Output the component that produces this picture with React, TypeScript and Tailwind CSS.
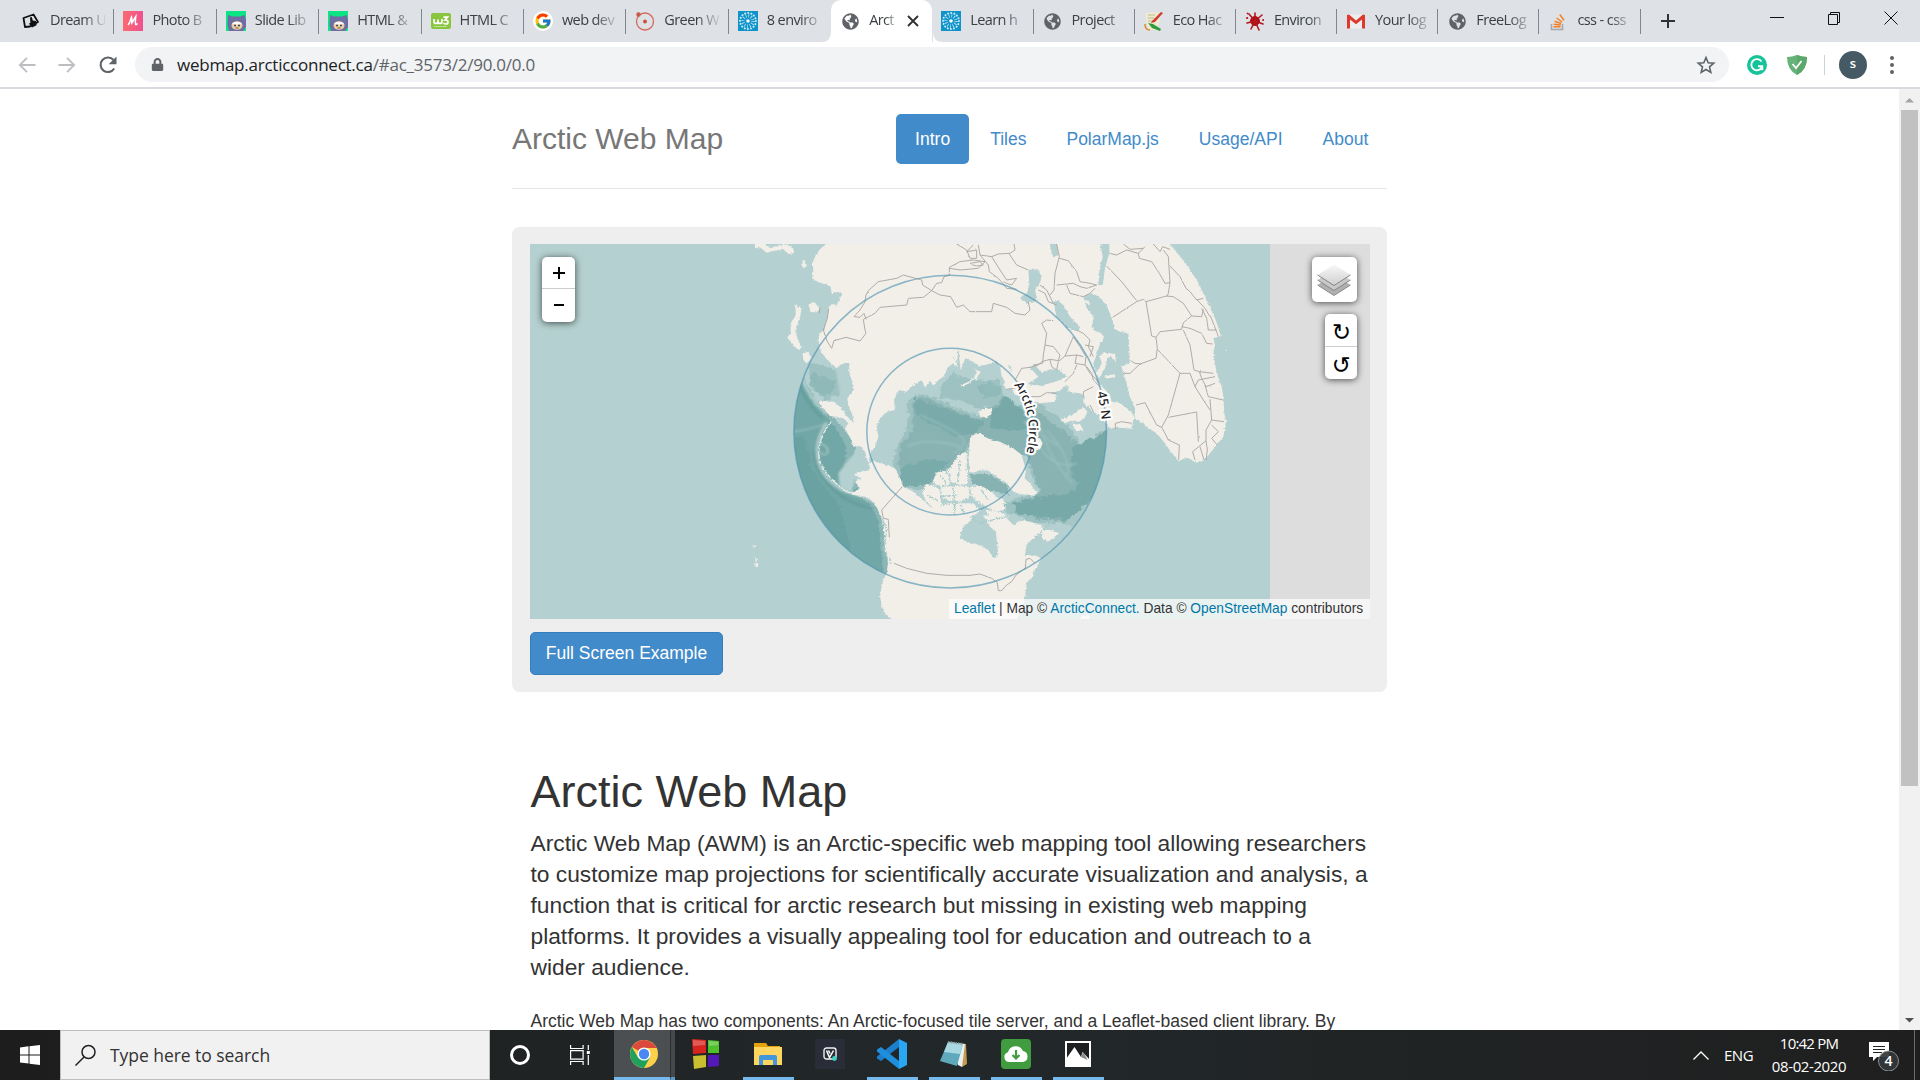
import React from "react";
import { FaGlobeAmericas, FaLock } from "react-icons/fa";
import { FcGoogle } from "react-icons/fc";

const UI = "font-['Open_Sans','Noto_Sans',sans-serif]";

/* ---------- favicons ---------- */

const Dream = () => (
  <svg viewBox="0 0 20 20" className="h-5 w-5">
    <path d="M2.5 7 12.5 3.5 17 11 9 15.5 4 16Z" fill="none" stroke="#111" strokeWidth="1.8" strokeLinejoin="round" />
    <path d="M9 6.5 10.8 6l1 3.4 3.2.6.6 4.2-4.6 2.4-3.2-4 1.6-.6Z" fill="#111" />
  </svg>
);
const Morph = () => (
  <div className="flex h-5 w-5 items-center justify-center bg-gradient-to-r from-[#fb6a6e] to-[#f0508f]">
    <svg viewBox="0 0 20 20" className="h-5 w-5">
      <path d="M5 14C7.500 12 7.500 8 8.500 6c.7 2 .2 4 .3 6C10.500 10 11 8 12.800 5.500c-.3 3-.8 5-.2 8 .8 0 1.400-.6 2-1" fill="none" stroke="#fff" strokeWidth="1.500" />
    </svg>
  </div>
);
const Cat = () => (
  <svg viewBox="0 0 20 20" className="h-5 w-5">
    <rect width="20" height="20" fill="#0be584" />
    <path d="M2 4 6 5.500h8L18.500 4 20 9v7l-3 4H3L1.500 14Z" fill="#6f6da3" />
    <ellipse cx="11" cy="14.500" rx="5.500" ry="4.300" fill="#e9cfa0" />
    <path d="M6 13c2-3 8-3 10 0l-2 .6h-6Z" fill="#fff" />
    <circle cx="9" cy="14.500" r="1" fill="#3c3650" />
    <circle cx="13" cy="14.500" r="1" fill="#3c3650" />
    <path d="M9.500 17h3" stroke="#7a5a43" />
  </svg>
);
const W3 = () => (
  <div className="flex h-4 w-5 flex-col items-center rounded-[2px] bg-[#8ac53f] text-white">
    <svg viewBox="0 0 20 16" className="h-4 w-5">
      <path d="M3 6v2.500q0 2 2 2t2-2V6.500v2q0 2 2 2t2-2V6M12.500 4.200h4L14 7q3 0 3 2t-2 2-2.500-1" fill="none" stroke="#fff" strokeWidth="1.700" />
      <path d="M3 13.500h13" stroke="#d5eab6" strokeDasharray="1.500 .6" />
    </svg>
  </div>
);
const GoogleG = () => (
  <div className="flex h-5 w-5 items-center justify-center rounded-full bg-white">
    <FcGoogle size={18} />
  </div>
);
const Orbit = () => (
  <svg viewBox="0 0 20 20" className="h-5 w-5">
    <circle cx="10" cy="10.500" r="8.500" fill="none" stroke="#d4695b" strokeWidth="1.300" />
    <circle cx="10" cy="10.500" r="2" fill="#cf4f3f" />
    <circle cx="3.500" cy="3.500" r="2.200" fill="#c95b4a" />
  </svg>
);
const Burst = () => (
  <svg viewBox="0 0 20 20" className="h-5 w-5">
    <rect width="20" height="20" fill="#0f93c9" />
    <g stroke="#c9ecfa" strokeLinecap="round">
      <circle cx="10" cy="10" r="8" fill="none" strokeWidth="2" strokeDasharray=".1 3.040" />
      <circle cx="10" cy="10" r="5" fill="none" strokeWidth="3.500" strokeDasharray=".7 1.900" strokeLinecap="butt" />
    </g>
    <circle cx="10" cy="10" r="1.800" fill="#fff" />
  </svg>
);
const Globe = () => <FaGlobeAmericas size={17} color="#5f6368" />;
const Eco = () => (
  <svg viewBox="0 0 20 20" className="h-5 w-5">
    <path d="M1 2 14 1l2 8-3 10-9-1Z" fill="#ecebd2" />
    <path d="M4 4h7M4 7h6M4 10h5" stroke="#c8b98c" />
    <path d="M8 10 17 1l2 1-8 9-4 1Z" fill="#cf3b2c" />
    <path d="m4 12 5 1 8 5-1 2-8-3Z" fill="#2f9b3a" />
    <path d="M1 13c0 4 2 6 5 6" stroke="#da8b35" fill="none" strokeWidth="1.500" />
  </svg>
);
const Splat = () => (
  <svg viewBox="0 0 20 20" className="h-5 w-5" stroke="#b3161d" strokeLinecap="round">
    <circle cx="10" cy="10" r="4.500" fill="#a80f16" />
    <path d="M10 10 4 3M10 10l7-6M10 10l8 3M10 10l4 9M10 10l-4 8M10 10 2 12M10 10V2" strokeWidth="1.600" />
    <circle cx="2" cy="7" r=".6" /><circle cx="18" cy="9" r=".5" /><circle cx="2.500" cy="2.500" r=".5" />
  </svg>
);
const Gmail = () => (
  <svg viewBox="0 0 20 20" className="h-5 w-5">
    <rect x="1.500" y="3.500" width="17" height="14" fill="#eee" />
    <path d="M1 17.500V4l2-.5 7 6 7-6 2 .5v13.500h-3V8.500l-6 4.700L4 8.500v9Z" fill="#db3a2d" />
  </svg>
);
const Stack = () => (
  <svg viewBox="0 0 20 20" className="h-5 w-5" fill="none">
    <path d="M3.500 13v5.500h11V13" stroke="#a6a8ab" strokeWidth="1.600" />
    <path d="M5.500 15.800h7M5.700 13.200l7 .8M6.600 10.300l6.600 2.200M8.600 7l5.600 4M11.800 3.500l4.200 5.800" stroke="#f48024" strokeWidth="1.500" />
  </svg>
);

type TabInfo = { title: string; icon: React.FC; active?: boolean; noSep?: boolean };
const tabs: TabInfo[] = [
  { title: "Dream U", icon: Dream },
  { title: "Photo B", icon: Morph },
  { title: "Slide Lib", icon: Cat },
  { title: "HTML &", icon: Cat },
  { title: "HTML C", icon: W3 },
  { title: "web dev", icon: GoogleG },
  { title: "Green W", icon: Orbit },
  { title: "8 enviro", icon: Burst, noSep: true },
  { title: "Arct", icon: Globe, active: true },
  { title: "Learn h", icon: Burst },
  { title: "Project", icon: Globe },
  { title: "Eco Hac", icon: Eco },
  { title: "Environ", icon: Splat },
  { title: "Your log", icon: Gmail },
  { title: "FreeLog", icon: Globe },
  { title: "css - css", icon: Stack },
];

function Tab({ t, wide }: { t: TabInfo; wide: boolean }) {
  const Icon = t.icon;
  return (
    <div className={"relative flex h-full shrink-0 items-center pl-[9px] " + (wide ? "w-[102.4px] " : "w-[101.2px] ") + (t.active ? "rounded-t-[10px] bg-white" : "")}>
      {t.active && (
        <svg viewBox="0 0 122 10" className="absolute -left-[10px] bottom-0 h-[10px] w-[122px]" fill="#fff">
          <path d="M0 10q10 0 10-10v10ZM122 10q-10 0-10-10v10Z" />
        </svg>
      )}
      <div className="flex w-5 justify-center"><Icon /></div>
      <div className={"ml-[9px] whitespace-nowrap pb-[2px] text-[14.5px] tracking-[-0.6px] text-[#3c4043] [mask-image:linear-gradient(to_right,#000_60%,rgba(0,0,0,0.12)_100%)] " + (t.active ? "w-[28px]" : "w-[55px]")}>{t.title}</div>
      {t.active && (
        <svg viewBox="0 0 12 12" className="ml-[10px] h-3 w-3" stroke="#303236" strokeWidth="1.900"><path d="m1 1 10 10M11 1 1 11" /></svg>
      )}
      {!t.active && !t.noSep && <div className="absolute right-0 top-[9px] h-[25px] w-px bg-[#80868b]" />}
    </div>
  );
}

function BrowserChrome() {
  return (
    <div className={UI}>
      <div className="flex h-[42px] bg-[#dee1e6] pl-[12px]">
        {tabs.map((t, i) => <Tab key={i} t={t} wide={i < 8} />)}
        <svg viewBox="0 0 16 16" className="ml-[19px] mt-[13px] h-4 w-4" stroke="#303236" strokeWidth="2"><path d="M8 1v14M1 8h14" /></svg>
        <div className="ml-auto flex items-start gap-[43px] pr-[22px] pt-[11px]">
          <svg viewBox="0 0 14 14" className="h-[14px] w-[14px]" stroke="#111"><path d="M0 6.500h14" /></svg>
          <svg viewBox="0 0 14 14" className="h-[14px] w-[14px]" fill="none" stroke="#111"><path d="M1.500 3.500h9v10h-9ZM3.500 3.500v-2h9v10h-2" /></svg>
          <svg viewBox="0 0 14 14" className="h-[14px] w-[14px]" stroke="#111"><path d="m.5.500 13 13M13.500.500l-13 13" /></svg>
        </div>
      </div>
      <div className="flex h-[47px] items-center border-b-2 border-[#d9dae0] bg-white pl-[17px]">
        <svg viewBox="0 0 20 20" className="h-5 w-5" fill="none" stroke="#bcbec1" strokeWidth="1.800"><path d="M18.500 10H3M10 2.800 2.800 10l7.200 7.200" /></svg>
        <svg viewBox="0 0 20 20" className="ml-5 h-5 w-5" fill="none" stroke="#bcbec1" strokeWidth="1.800"><path d="M1.500 10H17M10 2.800 17.200 10 10 17.200" /></svg>
        <svg viewBox="0 0 20 20" className="ml-[21px] h-5 w-5" fill="none" stroke="#5f6368" strokeWidth="2.100"><path d="M16.200 13.500A7.300 7.300 0 1 1 15.500 5" /><path d="M18.500 1.500v7.800h-7.800Z" fill="#5f6368" stroke="none" /></svg>
        <div className="ml-[17px] flex h-[35px] w-[1594px] items-center rounded-full bg-[#f1f3f4] pl-[16px] pr-[13px]">
          <FaLock size={13} color="#5f6368" />
          <div className="ml-[13px] text-[17px] tracking-[-0.24px] text-[#202124]">webmap.arcticconnect.ca<span className="text-[#5f6368]">/#ac_3573/2/90.0/0.0</span></div>
          <svg viewBox="0 0 20 20" className="ml-auto h-5 w-5" fill="none" stroke="#5f6368" strokeWidth="1.600"><path d="m10 2.500 2.200 5.200 5.600.5-4.300 3.700 1.300 5.500L10 14.500l-4.800 2.900 1.300-5.500L2.200 8.200l5.600-.5Z" /></svg>
        </div>
        <div className="ml-[18px] flex h-5 w-5 items-center justify-center rounded-full bg-[#15c39a]">
          <svg viewBox="0 0 20 20" className="h-5 w-5" fill="none" stroke="#fff" strokeWidth="1.900"><path d="M14.500 6.500A5.600 5.600 0 1 0 15 12M11 11.300h4.300v4" /></svg>
        </div>
        <svg viewBox="0 0 20 20" className="ml-5 h-5 w-5"><path d="M10 0q5 2 10 2 0 13-10 18Q0 15 0 2 5 2 10 0Z" fill="#67b279" /><path d="M10 0q5 2 10 2 0 13-10 18Z" fill="#5aa86b" /><path d="m5.500 9 3.500 4 5.500-7" fill="none" stroke="#fff" strokeWidth="1.800" /></svg>
        <div className="ml-[17px] h-5 w-px bg-[#cfd1d4]" />
        <div className="ml-[14px] flex h-7 w-7 items-center justify-center rounded-full bg-[#455a64] pb-px text-[13px] font-semibold text-white">s</div>
        <div className="ml-[23px] flex flex-col gap-[3px]">
          <i className="h-[4px] w-[4px] rounded-full bg-[#5f6368]" /><i className="h-[4px] w-[4px] rounded-full bg-[#5f6368]" /><i className="h-[4px] w-[4px] rounded-full bg-[#5f6368]" />
        </div>
      </div>
    </div>
  );
}

/* ---------- polar map; drawn on a grid of three units per pixel ---------- */

const EURASIA =
  "258,30 258,42 240,58 228,75 218,95 220,125 216,145 235,157 255,162 272,170 275,190 300,185 306,192 290,225 275,222 265,236 262,265 252,300 238,312 235,330 243,365 258,385 275,402 290,415 300,405 318,398 328,400 328,430 335,450 340,480 330,495 322,505 325,525 335,550 342,578 320,558 300,530 280,515 240,512 235,520 255,540 270,558 290,560 310,565 325,580 315,595 330,620 340,650 360,648 375,665 385,700 392,668 405,650 415,620 410,590 420,565 440,545 465,540 462,510 475,480 500,485 520,465 545,450 555,472 570,452 580,468 595,450 610,440 625,410 640,400 650,410 655,362 662,420 668,405 676,385 700,395 715,408 740,404 770,395 780,410 785,440 795,455 790,465 800,475 815,478 825,495 870,500 875,512 900,520 945,515 950,495 930,488 960,482 970,470 985,468 985,485 1020,490 1035,500 1030,520 1045,530 1060,545 1085,560 1095,575 1112,598 1122,592 1175,596 1180,570 1185,565 1210,580 1225,595 1250,610 1275,640 1295,670 1318,692 1340,683 1370,698 1390,693 1410,670 1430,645 1450,620 1458,575 1453,550 1450,500 1445,470 1430,430 1420,370 1425,345 1420,325 1443,318 1425,265 1400,210 1370,150 1330,90 1290,42 1282,30";

const AMERICA =
  "390,720 388,700 405,695 420,700 440,705 465,715 478,740 490,770 520,785 550,810 570,830 620,845 660,850 690,845 698,868 675,885 662,905 660,925 690,940 720,945 745,960 760,985 775,975 770,930 768,905 750,890 738,872 730,855 770,862 800,865 820,885 845,870 905,885 912,905 890,920 860,945 855,975 880,975 905,985 895,1000 880,1030 875,1045 858,1060 856,1100 850,1120 830,1172 460,1172 430,1145 420,1100 425,1062 440,1030 445,1000 435,955 430,880 415,840 395,812 375,800 345,795 318,785 340,788 360,775 345,755 365,745 342,735 350,728";

const GREENLAND =
  "690,625 702,612 720,608 742,625 780,635 820,655 845,675 852,700 857,725 854,745 870,760 885,782 897,785 880,797 840,792 820,785 805,765 770,740 745,722 720,720 700,728 688,725 686,680";

const ISLANDS = [
  "45,42 75,42 90,55 120,45 140,42 160,55 162,70 145,72 130,58 105,62 80,68 60,52 45,55",
  "188,90 196,92 200,108 192,116 186,108",
  "205,225 220,215 240,235 228,248 212,246",
  "165,225 185,232 180,262 165,300 172,325 185,350 178,360 158,345 142,322 152,310 152,280 168,255",
  "188,370 205,365 215,385 200,400 190,390",
  "660,465 680,458 700,445 712,425 700,415 690,408 705,418 720,425 712,442 695,455 670,470",
  "715,545 740,535 758,538 750,555 735,565 720,560",
  "872,640 885,625 900,625 908,640 900,658 880,662",
  "962,570 985,560 1010,545 1030,530 1042,545 1035,562 1018,575 990,572 975,580",
  "995,580 1020,582 1030,600 1010,604 1000,590",
  "1078,375 1095,368 1125,372 1128,395 1112,378 1102,385 1095,415 1078,445 1070,430 1085,400",
  "1092,440 1122,432 1126,440 1102,446",
  "910,900 930,900 958,910 940,925 920,935 905,922",
];

/* Canadian arctic islands */
const ARCHIPELAGO = [
  "640,700 655,675 682,665 686,690 682,715 684,762 660,765 630,755 632,735 622,725",
  "588,728 612,722 626,738 630,765 600,768 578,758",
  "560,762 590,770 600,785 604,825 585,838 562,820 546,790",
  "600,772 650,768 686,770 690,800 660,815 625,812 606,800",
  "690,772 720,765 755,785 780,810 800,838 770,845 740,832 715,815 695,800",
  "575,832 640,820 700,820 720,842 700,858 640,852 590,845",
  "735,840 775,845 805,858 785,868 750,860",
  "755,800 790,808 800,820 775,822",
];

const WATER = [
  "1030,200 1055,190 1078,200 1100,225 1115,265 1125,298 1140,305 1165,310 1168,360 1170,398 1145,410 1150,430 1158,455 1170,500 1185,535 1185,565 1175,545 1140,520 1115,515 1110,495 1095,478 1070,455 1072,420 1068,370 1090,325 1060,300 1055,285 1062,262 1040,235",
  "940,215 955,212 970,225 990,260 1020,290 1015,305 980,295 968,275 950,262",
  "865,120 890,118 905,135 900,160 885,180 893,212 860,218 838,205 860,190 868,165",
  "930,35 950,35 955,75 940,82 932,60",
  "1080,35 1108,35 1108,70 1095,115 1088,165 1076,165 1078,120 1088,80",
  "868,410 885,405 905,428 930,418 962,420 980,440 955,452 900,468 862,462 895,440",
];

const BORDERS = [
  "378,195 385,182 415,155 470,145 490,135 545,150 548,165 575,182 550,202 505,205 500,225 420,232 405,250 370,268 375,300 378,310 360,333 318,322 282,332 275,355 262,335 250,300",
  "378,195 375,215 360,240 342,260 360,262 372,250 378,268",
  "575,182 590,160 605,158 612,140 628,136 628,112 660,95 700,90 735,95 715,115 660,120 628,115",
  "575,182 600,195 632,200 650,232 670,225 690,245 755,245 760,220 800,232 825,250 855,255 870,240 865,215",
  "650,42 680,60 690,85 710,85 710,60 680,65 700,45",
  "715,45 720,75 755,80 775,72 810,70 825,60 822,42",
  "755,80 780,120 800,150 830,145 815,165 800,160 790,155",
  "808,72 830,105 865,120 M720,75 745,105 748,125 775,145 800,175 830,178",
  "690,100 720,95 730,105 710,108 695,104",
  "950,42 958,80 945,130 942,180 930,195 M958,85 985,92 1010,125 1020,155 1050,160 1070,165 1040,175 1020,170 1000,160 950,165",
  "900,165 920,180 935,210 940,220 M895,180 915,190 925,215 950,225 M980,165 990,190 1030,200 1050,190 1065,175",
  "1108,70 1130,75 1160,60 1195,70 1215,50 M1150,42 1170,58 1210,55",
  "1195,70 1198,85 1235,95 1258,130 1275,160 1290,158 1285,190 1280,200",
  "1240,42 1260,65 1268,50 1290,58 M1270,60 1285,80 1290,158 M1290,108 1320,140 1338,175 1350,185 1370,210 1390,205",
  "1100,108 1145,155 1190,212 M1118,262 1190,215 1210,208 1218,215 1280,198 1300,200 1330,220 1355,258 1385,260 1390,238",
  "1218,215 1235,318 1248,322 1260,305 1325,298 1330,278 1355,258",
  "1248,322 1252,355 1248,385 1200,402 1170,430 1148,430 M1172,392 1185,400 1205,402",
  "1252,358 1320,430 1285,555 1265,592 1250,585 1215,518 1188,525",
  "1285,562 1370,546 1375,635 M1265,592 1275,610 1285,630 1318,645 1316,690",
  "1320,430 1350,430 1365,470 1390,510 1410,540 M1365,470 1375,450 1425,440 M1395,465 1405,500 1450,510",
  "1330,300 1350,345 1362,420 1378,425 1420,430 M1325,290 1350,295 1385,310 1400,340 1418,342",
  "1385,235 1400,265 1405,300 1430,300 M1410,255 1422,285 1435,320 M1370,208 1395,235 1410,260",
  "1378,425 1385,445 1398,470 1425,460 M1410,508 1415,570 1452,575 M1415,570 1398,600 1398,632 1358,665 1365,690",
  "1398,632 1402,660 1398,690 M1415,585 1435,605 1415,625 1432,645 M1380,650 1392,690",
  "905,280 920,270 940,272 M905,280 920,310 915,345 940,350 960,375 955,392 930,388 905,395 M915,345 910,375 908,400 880,405",
  "930,390 935,410 950,420 955,395 975,378 1010,375 1030,380 M1000,320 985,355 975,378 M1010,375 1005,400 1035,405 1038,380 1020,350 1000,320",
  "1010,300 1030,310 1050,330 1045,350 1060,380 M1040,410 1055,430 1060,450 1080,470 M1010,405 1000,430 975,455 M1050,380 1060,350 1035,345 M1035,405 1050,430 1075,455 M1030,500 1030,485 1060,470",
  "1126,598 1126,580 1145,575 1175,580 M1060,545 1050,525",
  "825,450 845,415 870,412 895,405 905,395 M800,478 820,475 850,470 M860,500 900,500 920,488 950,490 M240,232 238,250 M266,236 262,265 250,300",
  "487,770 425,840 430,865 445,868 448,922",
  "462,1000 500,1015 560,1030 620,1036 690,1036 720,1032 755,1045 772,1058 775,1082 785,1082 800,1065 815,1055 828,1035 856,1015 858,988 870,985 885,1000",
];

function PolarMap() {
  return (
    <svg viewBox="-630 42 2520 1125" className="block h-[375px] w-[840px]">
      <defs>
        <clipPath id="disc"><circle cx="630.500" cy="605" r="469" /></clipPath>
        <filter id="coast" x="-5%" y="-5%" width="110%" height="110%">
          <feTurbulence type="fractalNoise" baseFrequency=".14" numOctaves="3" seed="4" />
          <feDisplacementMap in="SourceGraphic" scale="9" xChannelSelector="R" yChannelSelector="G" />
        </filter>
        <filter id="fjord" x="-5%" y="-5%" width="110%" height="110%">
          <feTurbulence type="fractalNoise" baseFrequency=".22" numOctaves="2" seed="12" />
          <feDisplacementMap in="SourceGraphic" scale="14" xChannelSelector="R" yChannelSelector="G" />
        </filter>
        <filter id="rough" x="-5%" y="-5%" width="110%" height="110%">
          <feTurbulence type="fractalNoise" baseFrequency=".12" numOctaves="2" seed="9" />
          <feDisplacementMap in="SourceGraphic" scale="5" xChannelSelector="R" yChannelSelector="G" />
        </filter>
        <filter id="soft">
          <feTurbulence type="fractalNoise" baseFrequency=".06" numOctaves="3" seed="2" />
          <feDisplacementMap in="SourceGraphic" scale="22" xChannelSelector="R" yChannelSelector="G" />
          <feGaussianBlur stdDeviation="1.600" />
        </filter>
        <filter id="softer"><feGaussianBlur stdDeviation="3" /></filter>
        <path id="inner" d="M380.500 605a250 250 0 0 1 500 0a250 250 0 0 1-500 0" />
        <path id="outer" d="M161.500 605a469 469 0 0 1 938 0a469 469 0 0 1-938 0" />
      </defs>
      <rect x="-630" y="42" width="2220" height="1125" fill="#b5d0d0" />
      <rect x="1184" y="42" width="406" height="1125" fill="#b5d0d0" />
      <rect x="1590" y="42" width="300" height="1125" fill="#ddd" />
      <g clipPath="url(#disc)">
        <g filter="url(#soft)">
          <path d="M140 400 190 440 230 515 290 570 345 640 330 740 400 800 420 840 435 900 448 1060 380 1130 60 1130 60 400Z" fill="#8ab6b5" />
          <path d="M140 420 180 450 222 520 275 575 320 650 310 730 380 815 412 860 422 920 430 1060 380 1130 60 1130 60 400Z" fill="#71a7a6" />
          <path d="M60 640 190 620 215 720 300 830 330 940 300 1060 60 1060Z" fill="#6aa2a1" />
          <path d="M205 400 260 410 310 430 300 490 260 510 215 480Z" fill="#9cc1c0" />
          <path d="M210 430 255 440 290 455 275 485 240 495 215 470Z" fill="#8eb9b8" />
          <path d="M505 510 540 490 590 505 640 530 720 555 780 490 850 530 900 520 990 590 1020 640 1130 580 1110 780 1000 880 900 880 800 850 780 820 850 800 900 785 870 730 860 680 760 640 700 605 680 680 620 720 560 780 480 780 460 700 470 650 500 600Z" fill="#9cc1c0" />
          <path d="M520 510 545 500 590 515 640 540 720 570 790 500 850 550 890 540 980 610 1020 650 1120 600 1100 780 1000 870 900 870 830 840 850 810 905 790 880 730 860 680 760 640 700 615 670 680 620 720 560 765 490 770 475 700 480 650 520 600Z" fill="#88b3b2" />
          <path d="M520 505 560 515 640 545 735 580 700 610 650 620 590 590 530 560Z" fill="#7aabaa" />
          <path d="M640 430 700 450 780 450 790 500 720 540 660 510 600 500 600 470Z" fill="#9dc2c1" />
          <path d="M710 470 750 455 785 480 770 500 730 500Z" fill="#8fbab9" />
          <path d="M690 735 740 728 800 762 810 792 750 782 695 760Z" fill="#86b2b1" />
          <path d="M820 820 900 800 990 790 1060 720 1110 640 1090 780 1000 868 900 862 830 850Z" fill="#76a9a8" />
          <path d="M1000 650 1110 600 1095 700 1040 800 1000 740 990 690Z" fill="#76a9a8" />
          <path d="M760 540 800 500 850 540 860 600 800 600 750 590Z" fill="#76a9a8" />
          <path d="M480 715 560 690 630 690 560 765 490 770Z" fill="#79abaa" />
          <path d="M1010 850 1060 800 1070 830 1010 900 970 880Z" fill="#a6c7c6" />
        </g>
        <path d="M286 415 330 400 338 490 325 540 300 490Z" fill="#b5d0d0" filter="url(#softer)" />
        <path d="M355 660 385 660 390 690 370 720 350 730 335 790 300 780 295 730 325 690Z" fill="#b5d0d0" filter="url(#softer)" />
        <g fill="none" filter="url(#softer)">
          <path d="M185 440Q205 500 258 548M260 578Q215 650 240 710Q270 770 340 790Q380 800 400 815" stroke="#abcbca" strokeWidth="10" />
          <path d="M172 445Q195 520 250 565M222 660Q225 740 300 795Q350 830 400 835" stroke="#649c9c" strokeWidth="7" />
          <path d="M540 555Q610 585 650 610Q700 640 640 670M890 560Q930 700 1000 760M920 600Q1000 690 980 740M160 605Q210 600 260 580M500 650Q560 620 660 650M900 650Q940 720 1010 700M870 560Q900 620 960 650" stroke="#9cc2c1" strokeOpacity=".75" strokeWidth="5" />
          <path d="M240 640Q270 650 262 670Q250 680 240 665" stroke="#abcbca" strokeWidth="4" />
        </g>
        <path d="M274 575Q228 630 238 690Q255 740 320 785L365 800" fill="none" stroke="#e5ebe7" strokeWidth="4" strokeDasharray="26 3 14 5" filter="url(#coast)" />
      </g>
      <g fill="#f2efe9" filter="url(#coast)">
        <polygon points={EURASIA} />
        <polygon points={AMERICA} />
        <polygon points={GREENLAND} />
        {ISLANDS.map((p, i) => <polygon key={i} points={p} />)}
        <path d="M40 945l5 4-4 4ZM45 980l6 10-4 6ZM42 1002l13-3-2 12-8-2ZM1455 360l5-2v5ZM1020 1167l8-12 8 4 10-6 4 14Z" />
      </g>
      <g fill="#f2efe9" filter="url(#fjord)">
        {ARCHIPELAGO.map((p, i) => <polygon key={i} points={p} />)}
      </g>
      <g fill="#b5d0d0" filter="url(#coast)">
        {WATER.map((p, i) => <polygon key={i} points={p} />)}
        <path d="M1072 370 1080 400 1066 430 1060 400Z" />
      </g>
      <g fill="#f2efe9" filter="url(#coast)">
        <polygon points={ISLANDS[10]} /><polygon points={ISLANDS[11]} />
        <path d="M1035 210l12 3 2 10-12-4ZM1060 300l22 8 10 12-8 18-20 10Z" />
      </g>
      <g fill="none" stroke="#a9cbcb" strokeWidth="3.500" filter="url(#fjord)">
        <path d="M660 690 652 765M600 800 650 795M682 640V720M560 795 595 812M690 860 720 880 800 858M860 945 900 910 940 870M425 860 440 900 432 960 455 1000M640 775 645 860M720 775 745 810M660 825 672 850M600 735 620 760" />
        <path d="M655 362v45M640 380l14 22M805 405l10 20" stroke="#b5d0d0" />
      </g>
      <g fill="none" stroke="#aaa6a4" strokeWidth="2.800" strokeLinejoin="round" filter="url(#rough)">
        {BORDERS.map((p, i) => <path key={i} d={"M" + p} />)}
      </g>
      <g fill="none" stroke="#4f93b0" strokeOpacity=".65" strokeWidth="4.500">
        <circle cx="630.500" cy="605" r="469" />
        <circle cx="630.500" cy="605" r="250" />
      </g>
      <g fontFamily="Noto Sans, sans-serif" fontSize="38" fontWeight="500" fill="#222" stroke="#fff" strokeWidth="13" strokeLinejoin="round" style={{ paintOrder: "stroke" }}>
        <text dy="13"><textPath href="#inner" startOffset="628" textLength="224">Arctic Circle</textPath></text>
        <text dy="13"><textPath href="#outer" startOffset="1351" textLength="86">45 N</textPath></text>
      </g>
    </svg>
  );
}

function Layers() {
  return (
    <svg viewBox="0 0 34 32" className="h-8 w-[34px]">
      <defs><linearGradient id="sheet" x2="0" y2="1"><stop offset="0" stopColor="#f8f8f8" /><stop offset="1" stopColor="#cfcfcf" /></linearGradient></defs>
      <path d="M.5 21 17 31.500 33.500 21 17 11Z" fill="#b0b0b0" /><path d="M.5 21 17 31.500 33.500 21" fill="none" stroke="#8b8b8b" />
      <path d="M.5 16 17 26.500 33.500 16 17 6Z" fill="#c8c8c8" /><path d="M.5 16 17 26.500 33.500 16" fill="none" stroke="#858585" />
      <path d="M.5 11 17 21.500 33.500 11 17 .5Z" fill="url(#sheet)" /><path d="M.5 11 17 21.500 33.500 11" fill="none" stroke="#858585" />
    </svg>
  );
}

function Page() {
  const ctl = "absolute flex flex-col overflow-hidden rounded-[5px] bg-white shadow-[0_1px_7px_rgba(0,0,0,0.65)]";
  return (
    <main className="flex h-[941px] overflow-hidden bg-white font-['Liberation_Sans',Arial,sans-serif] text-[17.5px] leading-[25px] text-[#333]">
      <div className="flex flex-1 justify-center">
        <div className="w-[875px] shrink-0 pt-[25px]">
          <header className="flex h-[75px] items-start justify-between border-b border-[#e5e5e5]">
            <h3 className="pt-[8px] text-[30px] leading-[34px] text-[#777]">Arctic Web Map</h3>
            <nav className="flex gap-[2.5px] text-[#428bca]">
              <a className="rounded-[5px] bg-[#428bca] px-[18.75px] py-[12.5px] text-white">Intro</a>
              <a className="px-[18.75px] py-[12.5px]">Tiles</a>
              <a className="px-[18.75px] py-[12.5px]">PolarMap.js</a>
              <a className="px-[18.75px] py-[12.5px]">Usage/API</a>
              <a className="px-[18.75px] py-[12.5px]">About</a>
            </nav>
          </header>
          <section className="mt-[38px] h-[465px] rounded-[7.5px] bg-[#eee] px-[18px] pt-[17px]">
            <div className="relative h-[375px] w-[840px]">
              <PolarMap />
              <div className={ctl + " left-[12px] top-[13px] h-[65px] w-[33px]"}>
                <div className="flex h-[32px] items-center justify-center border-b border-[#ccc]">
                  <svg viewBox="0 0 14 14" className="h-[14px] w-[14px]" stroke="#000" strokeWidth="2"><path d="M7 1v12M1 7h12" /></svg>
                </div>
                <div className="flex h-[31px] items-center justify-center">
                  <svg viewBox="0 0 14 14" className="h-[14px] w-[14px]" stroke="#000" strokeWidth="2"><path d="M2 7h10" /></svg>
                </div>
              </div>
              <div className={ctl + " right-[13px] top-[13px] h-[45px] w-[45px] items-center justify-center pr-px"}><Layers /></div>
              <div className={ctl + " right-[13px] top-[70px] h-[65px] w-[32px] text-center font-['DejaVu_Sans',sans-serif] text-black"}>
                <div className="h-[33px] border-b border-[#ccc] pl-px text-[23px] leading-[37px]">↻</div>
                <div className="h-[32px] pl-px text-[23px] leading-[36px]">↺</div>
              </div>
              <div className="absolute bottom-0 right-0 h-5 w-[421px] whitespace-nowrap bg-white/70 px-[5px] text-[13.75px] leading-[19px] text-[#333]">
                <span className="text-[#0078a8]">Leaflet</span> | Map © <span className="text-[#0078a8]">ArcticConnect.</span> Data © <span className="text-[#0078a8]">OpenStreetMap</span> contributors
              </div>
            </div>
            <button className="mt-[13px] block h-[43px] w-[193px] rounded-[5px] border border-[#357ebd] bg-[#428bca] text-white">Full Screen Example</button>
          </section>
          <article className="px-[18.500px] pt-[75px]">
            <h1 className="text-[45px] leading-[50px]">Arctic Web Map</h1>
            <p className="mt-[11px] whitespace-nowrap text-[22.750px] leading-[31px]">
              Arctic Web Map (AWM) is an Arctic-specific web mapping tool allowing researchers<br />
              to customize map projections for scientifically accurate visualization and analysis, a<br />
              function that is critical for arctic research but missing in existing web mapping<br />
              platforms. It provides a visually appealing tool for education and outreach to a<br />
              wider audience.
            </p>
            <p className="mt-[26px] whitespace-nowrap">Arctic Web Map has two components: An Arctic-focused tile server, and a Leaflet-based client library. By</p>
          </article>
        </div>
      </div>
      <div className="flex w-[21px] flex-col items-center bg-[#f1f1f1]">
        <svg viewBox="0 0 21 21" className="h-[21px] w-[21px]"><path d="M6 13.500 10.500 9l4.500 4.500Z" fill="#a3a3a3" /></svg>
        <div className="h-[676px] w-[17px] bg-[#c1c1c1]" />
        <svg viewBox="0 0 21 21" className="mt-auto h-[21px] w-[21px]"><path d="M6 9l4.500 4.500L15 9Z" fill="#505050" /></svg>
      </div>
    </main>
  );
}

/* ---------- taskbar ---------- */

const Chrome = () => (
  <svg viewBox="0 0 28 28" className="h-7 w-7">
    <circle cx="14" cy="14" r="14" fill="#fdd04a" />
    <path d="M14 14 1.900 7A14 14 0 0 1 26.100 7H14Z" fill="#dc4a3e" />
    <path d="M1.900 7A14 14 0 0 0 14 28l6-10.500-6 2L8 17.500Z" fill="#1fa15d" />
    <path d="M14 7.500h12.500" stroke="#dc4a3e" />
    <circle cx="14" cy="14" r="6.600" fill="#fff" /><circle cx="14" cy="14" r="5.200" fill="#4a87f0" />
  </svg>
);
const Blocks = () => (
  <svg viewBox="0 0 28 30" className="h-[30px] w-7">
    <path d="m0 0 14 1v13L1 15Z" fill="#d6241e" /><path d="m16 1 11 1v12H16Z" fill="#4fbf2c" />
    <path d="m1 17 13-1v12L2 30Z" fill="#c9bf31" /><path d="M16 16h11v11l-11 1Z" fill="#5218b8" />
    <path d="m1 1 12 1v4L1 7ZM17 2l9 1v3l-9 1Z" fill="#fff" opacity=".25" />
  </svg>
);
const Folder = () => (
  <svg viewBox="0 0 28 24" className="h-6 w-7">
    <path d="M0 1h12l2 3h12v6H0Z" fill="#e5a00d" /><path d="M0 5h28v18H0Z" fill="#ffd562" />
    <path d="M5 23v-8q0-2 2-2h14q2 0 2 2v8h-4v-5H9v5Z" fill="#3f97dc" />
  </svg>
);
const Saavn = () => (
  <div className="flex h-[30px] w-[30px] items-center justify-center bg-[#2a2d38]">
    <svg viewBox="0 0 14 14" className="h-[14px] w-[14px]"><rect x="1" y="1" width="12" height="11" rx="2.500" fill="none" stroke="#eee" strokeWidth="1.400" /><path d="m3.500 3.500 3 7 4-7M5.500 3.500l1.500 3" stroke="#fff" strokeWidth="1.500" fill="none" /><circle cx="11.500" cy="11.500" r="2.400" fill="#3fd0c0" /></svg>
  </div>
);
const Code = () => (
  <svg viewBox="0 0 30 30" className="h-[30px] w-[30px]">
    <path d="M22 0 30 4v22l-8 4Z" fill="#2aa7f2" /><path d="M22 0v8L4 22 0 19.500v-2Z" fill="#1b7fcb" /><path d="M22 30v-8L4 8 0 10.500v2Z" fill="#1f8fdd" />
  </svg>
);
const Note = () => (
  <svg viewBox="0 0 28 28" className="h-7 w-7">
    <path d="m10 3 16 1 1 20-5 3Z" fill="#c59b4e" /><path d="m9 2 16 2-3 23-4-2Z" fill="#e9f0f0" /><path d="M8 2 23 4 17 26 0 21Z" fill="#5fa9bd" /><path d="m8 2 15 2-3 10L4 12Z" fill="#a9d8e2" /><path d="m8 2 15 2" stroke="#8b9a9c" strokeWidth="2" strokeDasharray="1.500 1" />
  </svg>
);
const Cloud = () => (
  <div className="flex h-[30px] w-[30px] items-center justify-center rounded-[4px] bg-[#419b3f]">
    <svg viewBox="0 0 24 20" className="h-5 w-6"><path d="M5.500 18a5 5 0 0 1-1.500-9.800A8 8 0 0 1 19 7a5.600 5.600 0 0 1 0 11Z" fill="#fff" /><path d="M12 6v8M8.500 11l3.500 3.500 3.500-3.500" stroke="#419b3f" strokeWidth="2.200" fill="none" /></svg>
  </div>
);
const Photo = () => (
  <svg viewBox="0 0 26 26" className="h-[26px] w-[26px]"><rect x="1" y="1" width="24" height="24" fill="#1d1f21" stroke="#fff" strokeWidth="2" /><path d="M1 25V18L9.500 6 16 16l1.500-5 7.500 8v6Z" fill="#fff" /><path d="m16 16 2-5 3 5 1.500 3Z" fill="#8b8b8b" /></svg>
);

const apps: { icon: React.FC; open: boolean }[] = [
  { icon: Blocks, open: false }, { icon: Folder, open: true }, { icon: Saavn, open: false }, { icon: Code, open: true },
  { icon: Note, open: true }, { icon: Cloud, open: true }, { icon: Photo, open: true },
];

function Taskbar() {
  return (
    <footer className={"flex h-[50px] bg-gradient-to-r from-[#1d1d1d] via-[#22282a] to-[#1f1f1f] text-white " + UI}>
      <div className="flex w-[60px] items-center justify-center">
        <svg viewBox="0 0 20 20" className="h-5 w-5" fill="#fff"><path d="M0 2.500 8.500 1.300v8.200H0ZM9.500 1.200 20 0v9.500H9.500ZM0 10.500h8.500v8L0 17.500ZM9.500 10.500H20V20L9.500 18.700Z" /></svg>
      </div>
      <div className="flex w-[430px] items-center border border-[#bdbdbd] bg-[#f1f1f1] pl-[14px]">
        <svg viewBox="0 0 22 22" className="h-[22px] w-[22px]" fill="none" stroke="#222" strokeWidth="1.500"><circle cx="13.500" cy="8" r="6.500" /><path d="m9 13-8.500 8.500" /></svg>
        <div className="ml-[13px] text-[17.5px] tracking-[-0.05px] text-[#333]">Type here to search</div>
      </div>
      <div className="flex w-[60px] items-center justify-center"><div className="h-[20px] w-[20px] rounded-full border-[3px] border-white" /></div>
      <div className="flex w-[64px] items-center pl-[20px]">
        <svg viewBox="0 0 20 20" className="h-5 w-5" fill="none" stroke="#fff" strokeWidth="1.200"><path d="M.6 0v3.500h12.500V0M.6 5.600h12.500v8.600H.6ZM.6 20v-3.500h12.500V20M18.300 0v5M18.300 10v10" /><path d="M16.800 6h3v3h-3Z" fill="#fff" stroke="none" /></svg>
      </div>
      <div className="flex w-[61px]">
        <div className="flex w-[56px] items-center justify-center border-b-[3px] border-[#76b9ed] bg-[#4b4f51] pl-[3px]"><Chrome /></div>
        <div className="w-[5px] border-b-[3px] border-l border-b-[#5f9bc9] border-l-[#2c2f30] bg-[#44484a]" />
      </div>
      <div className="flex">
        {apps.map(({ icon: Icon, open }, i) => (
          <div key={i} className="flex w-[62px] justify-center">
            <div className={"flex w-[51px] items-center justify-center border-b-[3px] " + (open ? "border-[#76b9ed]" : "border-transparent")}><Icon /></div>
          </div>
        ))}
      </div>
      <div className="ml-auto flex items-center pr-[5px]">
        <svg viewBox="0 0 16 9" className="h-[9px] w-4" fill="none" stroke="#fff" strokeWidth="1.300"><path d="m.5 8.500 7.500-7.500 7.500 7.500" /></svg>
        <div className="ml-[15px] w-[30px] text-[15px] tracking-[-0.5px]">ENG</div>
        <div className="ml-[13px] w-[84px] whitespace-nowrap text-center text-[15px] leading-[23px] tracking-[-0.4px]"><span className="tracking-[-0.8px]">10:42 PM</span><br />08-02-2020</div>
        <svg viewBox="0 0 32 32" className="ml-[17px] h-8 w-8">
          <path d="M1 3h20v15H9l-4 4v-4H1Z" fill="#fff" /><path d="M5 7.500h12M5 10.500h12M5 13.500h9" stroke="#222" />
          <circle cx="20.500" cy="22" r="10" fill="#333739" fillOpacity=".93" stroke="#8b8d8e" />
          <text x="20.500" y="27" textAnchor="middle" fontSize="14" fontWeight="600" fill="#fff">4</text>
        </svg>
        <div className="ml-[14px] h-[50px] w-px bg-[#6b6d6e]" />
      </div>
    </footer>
  );
}

export default function App() {
  return (
    <div className="h-[1080px] w-[1920px] overflow-hidden bg-white">
      <BrowserChrome />
      <Page />
      <Taskbar />
    </div>
  );
}
